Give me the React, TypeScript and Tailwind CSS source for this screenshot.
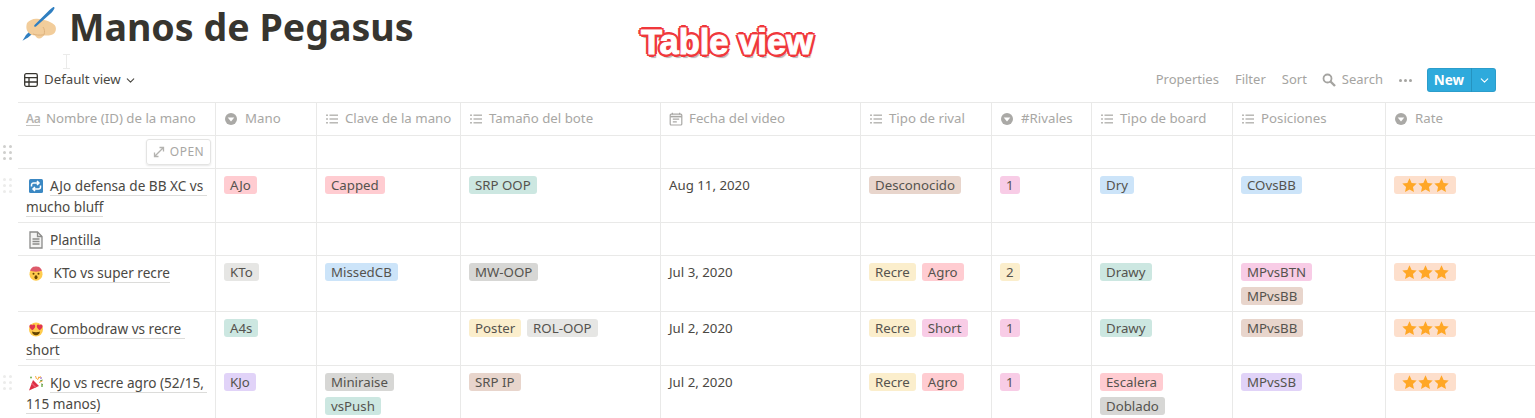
import { ReactNode } from "react";
import { ChevronDown } from "lucide-react";

const TAG = {
  red: "bg-[#ffccd1]",
  green: "bg-[#cce7e1]",
  blue: "bg-[#cce4f9]",
  purple: "bg-[#e1d3f8]",
  pink: "bg-[#f8cce6]",
  yellow: "bg-[#fbeecc]",
  brown: "bg-[#e8d5cc]",
  light: "bg-[#e6e6e4]",
  gray: "bg-[#d7d7d5]",
  orange: "bg-[#fddfcc]",
};
type Color = keyof typeof TAG;
type T = [string, Color];

const COLS = [
  "w-[198px]",
  "w-[101px]",
  "w-[144px]",
  "w-[200px]",
  "w-[200px]",
  "w-[131px]",
  "w-[100px]",
  "w-[141px]",
  "w-[153px]",
  "flex-1",
];

function ListIcon() {
  return (
    <svg width="14" height="14" viewBox="0 0 14 14" className="shrink-0" fill="#b4b3b0">
      <rect x="1" y="2.500" width="2" height="1.400" />
      <rect x="1" y="6.300" width="2" height="1.400" />
      <rect x="1" y="10.100" width="2" height="1.400" />
      <rect x="4.500" y="2.500" width="8.500" height="1.400" />
      <rect x="4.500" y="6.300" width="8.500" height="1.400" />
      <rect x="4.500" y="10.100" width="8.500" height="1.400" />
    </svg>
  );
}

function SelectIcon() {
  return (
    <svg width="14" height="14" viewBox="0 0 14 14" className="mr-[1px] shrink-0">
      <circle cx="7" cy="7" r="6" fill="#aaa9a6" />
      <path d="M3.700 5.400h6.600L7 9.600z" fill="#fff" />
    </svg>
  );
}

function DateIcon() {
  return (
    <svg width="14" height="14" viewBox="0 0 14 14" className="shrink-0" fill="none" stroke="#a9a8a5" strokeWidth="1.200">
      <rect x="1.200" y="2.200" width="11.600" height="10.800" rx="1" />
      <path d="M1.200 4.600h11.600" strokeWidth="1.600" />
      <path d="M3.400 0.800v1.600M10.600 0.800v1.600M3.800 7.200h6.400M3.800 9.800h4" />
    </svg>
  );
}

function TextIcon() {
  return (
    <span className="w-[14px] shrink-0 border-b border-[#c4c3c0] text-[12px] font-semibold leading-[12px] tracking-[-0.3px] text-[#b4b3b0]">
      Aa
    </span>
  );
}

function HeadCell({ icon, label, col }: { icon: ReactNode; label: string; col: number }) {
  return (
    <div className={`${COLS[col]} ${col < 9 ? "border-r" : ""} flex shrink-0 items-center gap-[6px] border-[#e9e9e8] px-2`}>
      {icon}
      <span className="whitespace-nowrap text-[13.250px] text-[#a8a7a4]">{label}</span>
    </div>
  );
}

function Tag({ label, color }: { label: string; color: Color }) {
  return (
    <span className={`${TAG[color]} flex h-[18px] items-center whitespace-nowrap rounded-[3px] px-[6px] text-[13.250px] leading-[18px] text-[#55534e]`}>
      {label}
    </span>
  );
}

function Stars() {
  return (
    <span className="flex h-[18px] w-[62px] items-center justify-center gap-[1px] rounded-[3px] bg-[#fddfcc]">
      {[0, 1, 2].map(i => (
        <svg key={i} width="15" height="14" viewBox="0 0 24 23" fill="#ffa726">
          <path d="M12 0.500l3.500 7.600 8.300 1-6.100 5.700 1.600 8.200L12 18.900 4.700 23l1.600-8.200L.2 9.100l8.300-1z" />
        </svg>
      ))}
    </span>
  );
}

function TagCell({ tags, col }: { tags: T[]; col: number }) {
  return (
    <div className={`${COLS[col]} flex shrink-0 flex-wrap content-start gap-[6px] border-r border-[#e9e9e8] px-2 pt-[7px]`}>
      {tags.map(([label, color]) => (
        <Tag key={label} label={label} color={color} />
      ))}
    </div>
  );
}

function Handle({ dark }: { dark?: boolean }) {
  return (
    <div className="absolute left-[-15px] top-[9px] grid grid-cols-2 gap-[3px]">
      {[0, 1, 2, 3, 4, 5].map(i => (
        <span key={i} className={`h-[3px] w-[3px] rounded-full ${dark ? "bg-[#cfcfcd]" : "bg-[#ececeb]"}`} />
      ))}
    </div>
  );
}

function RepeatEmoji() {
  return (
    <svg width="16" height="16" viewBox="0 0 16 16" className="mr-[6px] ml-[2px] inline-block align-[-3px]">
      <rect x="1" y="1" width="14" height="14" rx="1.500" fill="#3b88c3" />
      <path d="M3.500 8.500V7a2 2 0 0 1 2-2h5M9 3l2 2-2 2M12.500 7.500V9a2 2 0 0 1-2 2h-5M7 13l-2-2 2-2" fill="none" stroke="#fff" strokeWidth="1.500" />
    </svg>
  );
}

function PageEmoji() {
  return (
    <svg width="16" height="18" viewBox="0 0 16 18" className="mr-[6px] ml-[2px] inline-block align-[-4px]" fill="none" stroke="#8c8c8a" strokeWidth="1.300">
      <path d="M2 1h7.500L14 5.500V17H2z" fill="#f4f4f3" />
      <path d="M9.500 1v4.500H14" />
      <path d="M4.500 8h7M4.500 10.500h7M4.500 13h7" />
    </svg>
  );
}

function MindBlownEmoji() {
  return (
    <svg width="16" height="16" viewBox="0 0 16 16" className="mr-[6px] ml-[2px] inline-block align-[-3px]">
      <circle cx="8" cy="9.200" r="6.500" fill="#ffcc4d" />
      <path d="M2 5.500c1-2 2-3 3-3.500 1-.8 5-.8 6 0 1 .5 2 1.500 3 3.500-2 1.500-10 1.500-12 0z" fill="#dd5a6a" />
      <circle cx="5.500" cy="8.700" r="1" fill="#664500" />
      <circle cx="10.500" cy="8.700" r="1" fill="#664500" />
      <ellipse cx="8" cy="12.300" rx="1.500" ry="2" fill="#664500" />
    </svg>
  );
}

function HeartEyesEmoji() {
  return (
    <svg width="16" height="16" viewBox="0 0 16 16" className="mr-[6px] ml-[2px] inline-block align-[-3px]">
      <circle cx="8" cy="8.500" r="7" fill="#ffcc4d" />
      <path d="M4.300 9.200C2 7.500 1 6 1.500 4.500c.5-1.300 2.200-1.300 2.800-.2.700-1.100 2.500-1 2.900.4.400 1.500-1 3-2.900 4.500z" fill="#e0364f" />
      <path d="M11.700 9.200C14 7.500 15 6 14.500 4.500c-.5-1.300-2.200-1.300-2.800-.2-.7-1.100-2.500-1-2.900.4-.4 1.500 1 3 2.900 4.500z" fill="#e0364f" />
      <path d="M4 10.500c2.500 1 5.500 1 8 0-.3 2.500-2 3.700-4 3.700s-3.700-1.200-4-3.700z" fill="#664500" />
    </svg>
  );
}

function PartyEmoji() {
  return (
    <svg width="16" height="16" viewBox="0 0 16 16" className="mr-[6px] ml-[2px] inline-block align-[-3px]">
      <path d="M1 15.500L5 5l6 6z" fill="#dd2e44" />
      <path d="M4 7.500l4.500 4.500-1.500.7-3.600-3.600z" fill="#ea596e" />
      <circle cx="3" cy="2.500" r="1" fill="#77b255" />
      <circle cx="13" cy="3" r="1" fill="#aa8dd8" />
      <circle cx="14" cy="11" r="1" fill="#77b255" />
      <path d="M7.500 1l1 3M11 1.500L9.500 5M14.500 6L11 7.500M10 3.500l3-2" stroke="#fcab40" strokeWidth="1" />
      <path d="M12 6l2.500-1M13 9l2 .5" stroke="#5c913b" strokeWidth="1" />
    </svg>
  );
}

function HandEmoji() {
  return (
    <svg width="36" height="36" viewBox="0 0 36 36" className="mb-[6px] shrink-0">
      <path d="M0.500 34.800L4 29 12 21 15 24 6 31.500z" fill="#2f7fc1" />
      <path d="M5 17c2.500-2.800 6-4.500 10-4.200 6 .4 13 2.500 17 5.600 2.500 2 2.500 6 .5 8.500-2 2.300-6 3-10.500 2.600-1.500 1.500-2.500 3-5 3-2 0-3-1.500-4-3-2.500-.3-5-1-6.500-3C4 24 4 20 5 17z" fill="#f2cd9b" />
      <path d="M11 28c2.500 1 6 1.500 11 .8M21 21c1.500 2 2 4.500 1 7.800" stroke="#deb27e" strokeWidth="1" fill="none" />
      <path d="M31 1.200c.8-.6 1.900.3 1.400 1.200-.8 1.800-2 3.200-3.500 4.800L14 20.500c-1.200 1-2.500-.4-1.500-1.500L27 4.500c1.200-1.200 2.700-2.300 4-3.300z" fill="#2f7fc1" />
    </svg>
  );
}

function TitleCell({ icon, text }: { icon?: ReactNode; text: string }) {
  return (
    <div className={`${COLS[0]} shrink-0 border-r border-[#e9e9e8] pl-2 pr-1 pt-[6px] text-[13.600px] leading-[21px] text-[#4a4843]`}>
      {icon}
      <span className="whitespace-pre-wrap border-b border-[#dcdcda]">{text}</span>
    </div>
  );
}

const ROWS: {
  h: string;
  icon: ReactNode;
  title: string;
  mano?: T[];
  clave?: T[];
  bote?: T[];
  date?: string;
  rival?: T[];
  num?: T[];
  board?: T[];
  pos?: T[];
  stars?: boolean;
  handle?: boolean;
}[] = [
  {
    h: "h-[54px]",
    icon: <RepeatEmoji />,
    title: "AJo defensa de BB XC vs mucho bluff",
    mano: [["AJo", "red"]],
    clave: [["Capped", "red"]],
    bote: [["SRP OOP", "green"]],
    date: "Aug 11, 2020",
    rival: [["Desconocido", "brown"]],
    num: [["1", "pink"]],
    board: [["Dry", "blue"]],
    pos: [["COvsBB", "blue"]],
    stars: true,
    handle: true,
  },
  { h: "h-[33px]", icon: <PageEmoji />, title: "Plantilla" },
  {
    h: "h-[56px]",
    icon: <MindBlownEmoji />,
    title: " KTo vs super recre",
    mano: [["KTo", "light"]],
    clave: [["MissedCB", "blue"]],
    bote: [["MW-OOP", "gray"]],
    date: "Jul 3, 2020",
    rival: [["Recre", "yellow"], ["Agro", "red"]],
    num: [["2", "yellow"]],
    board: [["Drawy", "green"]],
    pos: [["MPvsBTN", "pink"], ["MPvsBB", "brown"]],
    stars: true,
  },
  {
    h: "h-[54px]",
    icon: <HeartEyesEmoji />,
    title: "Combodraw vs recre short",
    mano: [["A4s", "green"]],
    bote: [["Poster", "yellow"], ["ROL-OOP", "light"]],
    date: "Jul 2, 2020",
    rival: [["Recre", "yellow"], ["Short", "pink"]],
    num: [["1", "pink"]],
    board: [["Drawy", "green"]],
    pos: [["MPvsBB", "brown"]],
    stars: true,
  },
  {
    h: "h-[60px]",
    icon: <PartyEmoji />,
    title: "KJo vs recre agro (52/15, 115 manos)",
    mano: [["KJo", "purple"]],
    clave: [["Miniraise", "gray"], ["vsPush", "green"]],
    bote: [["SRP IP", "brown"]],
    date: "Jul 2, 2020",
    rival: [["Recre", "yellow"], ["Agro", "red"]],
    num: [["1", "pink"]],
    board: [["Escalera", "red"], ["Doblado", "gray"]],
    pos: [["MPvsSB", "purple"]],
    stars: true,
    handle: true,
  },
];

function DataRow({ row }: { row: (typeof ROWS)[number] }) {
  return (
    <div className={`${row.h} relative flex border-b border-[#e9e9e8]`}>
      {row.handle && <Handle />}
      <TitleCell icon={row.icon} text={row.title} />
      <TagCell tags={row.mano ?? []} col={1} />
      <TagCell tags={row.clave ?? []} col={2} />
      <TagCell tags={row.bote ?? []} col={3} />
      <div className={`${COLS[4]} shrink-0 border-r border-[#e9e9e8] px-2 pt-[6px] text-[13.250px] leading-[21px] text-[#4a4843]`}>
        {row.date}
      </div>
      <TagCell tags={row.rival ?? []} col={5} />
      <TagCell tags={row.num ?? []} col={6} />
      <TagCell tags={row.board ?? []} col={7} />
      <TagCell tags={row.pos ?? []} col={8} />
      <div className={`${COLS[9]} pl-2 pt-[7px]`}>{row.stars && <Stars />}</div>
    </div>
  );
}

function EmptyRow() {
  return (
    <div className="relative flex h-[33px] border-b border-[#e9e9e8]">
      <Handle dark />
      <div className={`${COLS[0]} flex shrink-0 items-center justify-end border-r border-[#e9e9e8] pr-[4px]`}>
        <span className="flex h-[26px] w-[65px] items-center justify-center gap-[5px] rounded-[3px] border border-[#e4e4e3] text-[12px] tracking-[0.5px] text-[#a8a7a4] shadow-[0_1px_2px_rgba(15,15,15,0.1)]">
          <svg width="12" height="12" viewBox="0 0 12 12" fill="none" stroke="#b4b3b0" strokeWidth="1.300">
            <path d="M2 10L10 2M6.500 1.500h4v4M1.500 6.500v4h4" />
          </svg>
          OPEN
        </span>
      </div>
      {[1, 2, 3, 4, 5, 6, 7, 8].map(c => (
        <div key={c} className={`${COLS[c]} shrink-0 border-r border-[#e9e9e8]`} />
      ))}
    </div>
  );
}

export default function App() {
  return (
    <div className="relative h-[418px] overflow-hidden bg-white font-['Noto_Sans',sans-serif]">
      {/* Title */}
      <div className="flex h-[58px] items-center gap-[11px] pb-[4px] pl-[22px]">
        <HandEmoji />
        <h1 className="text-[37.600px] font-bold leading-none text-[#37352f]">Manos de Pegasus</h1>
      </div>

      {/* annotation pasted over the screenshot */}
      <div className="absolute left-[641px] top-[22px] font-['Liberation_Sans',sans-serif] text-[34.500px] font-bold leading-[40px] text-white [-webkit-text-stroke:1px_#fff] [text-shadow:3px_0_0_#f0383c,-3px_0_0_#f0383c,0_3px_0_#f0383c,0_-3px_0_#f0383c,2px_2px_0_#f0383c,-2px_2px_0_#f0383c,2px_-2px_0_#f0383c,-2px_-2px_0_#f0383c,2px_4px_1px_#b5b5b5]">
        Table view
      </div>

      {/* mouse cursor caught in the capture */}
      <svg width="7" height="15" viewBox="0 0 7 15" fill="none" stroke="#ebebea" className="absolute left-[63px] top-[54px]">
        <path d="M0 .5h7M3.500 .5v14M0 14.500h7" />
      </svg>

      {/* Toolbar */}
      <div className="ml-[24px] flex h-[44px] items-center">
        <svg width="14" height="14" viewBox="0 0 14 14" fill="none" stroke="#37352f" strokeWidth="1.300">
          <rect x="0.700" y="0.700" width="12.600" height="12.600" rx="1.500" />
          <path d="M0.700 4.700h12.600M0.700 9h12.600M5 4.700v8.600" />
        </svg>
        <span className="ml-[6px] text-[13.250px] text-[#4a4843]">Default view</span>
        <ChevronDown size={13} strokeWidth={2} className="ml-[3px] text-[#4a4843]" />
        <div className="ml-auto flex items-center pr-[39px] text-[13px] text-[#a5a4a1]">
          <span>Properties</span>
          <span className="ml-[16px]">Filter</span>
          <span className="ml-[16px]">Sort</span>
          <svg width="14" height="14" viewBox="0 0 14 14" fill="none" stroke="#a5a4a1" className="ml-[15px]">
            <circle cx="5.500" cy="5.500" r="4" strokeWidth="1.800" />
            <path d="M8.500 8.500L13 13" strokeWidth="2.400" />
          </svg>
          <span className="ml-[6px]">Search</span>
          <span className="ml-[16px] flex gap-[2px]">
            <i className="h-[3px] w-[3px] rounded-full bg-[#a5a4a1]" />
            <i className="h-[3px] w-[3px] rounded-full bg-[#a5a4a1]" />
            <i className="h-[3px] w-[3px] rounded-full bg-[#a5a4a1]" />
          </span>
          <div className="ml-[15px] flex h-[24px] w-[69px] rounded-[3px] bg-[#2eaadc] text-white shadow-[inset_0_0_0_1px_rgba(15,15,15,0.08)]">
            <span className="flex w-[45px] items-center justify-center border-r border-[#2593c0] text-[13.500px] font-bold">New</span>
            <span className="flex flex-1 items-center justify-center">
              <ChevronDown size={13} strokeWidth={2} />
            </span>
          </div>
        </div>
      </div>

      {/* Table */}
      <div className="ml-[18px]">
        <div className="flex h-[34px] border-y border-[#e9e9e8]">
          <HeadCell col={0} icon={<TextIcon />} label="Nombre (ID) de la mano" />
          <HeadCell col={1} icon={<SelectIcon />} label="Mano" />
          <HeadCell col={2} icon={<ListIcon />} label="Clave de la mano" />
          <HeadCell col={3} icon={<ListIcon />} label="Tamaño del bote" />
          <HeadCell col={4} icon={<DateIcon />} label="Fecha del video" />
          <HeadCell col={5} icon={<ListIcon />} label="Tipo de rival" />
          <HeadCell col={6} icon={<SelectIcon />} label="#Rivales" />
          <HeadCell col={7} icon={<ListIcon />} label="Tipo de board" />
          <HeadCell col={8} icon={<ListIcon />} label="Posiciones" />
          <HeadCell col={9} icon={<SelectIcon />} label="Rate" />
        </div>
        <EmptyRow />
        {ROWS.map(r => (
          <DataRow key={r.title} row={r} />
        ))}
      </div>
    </div>
  );
}
